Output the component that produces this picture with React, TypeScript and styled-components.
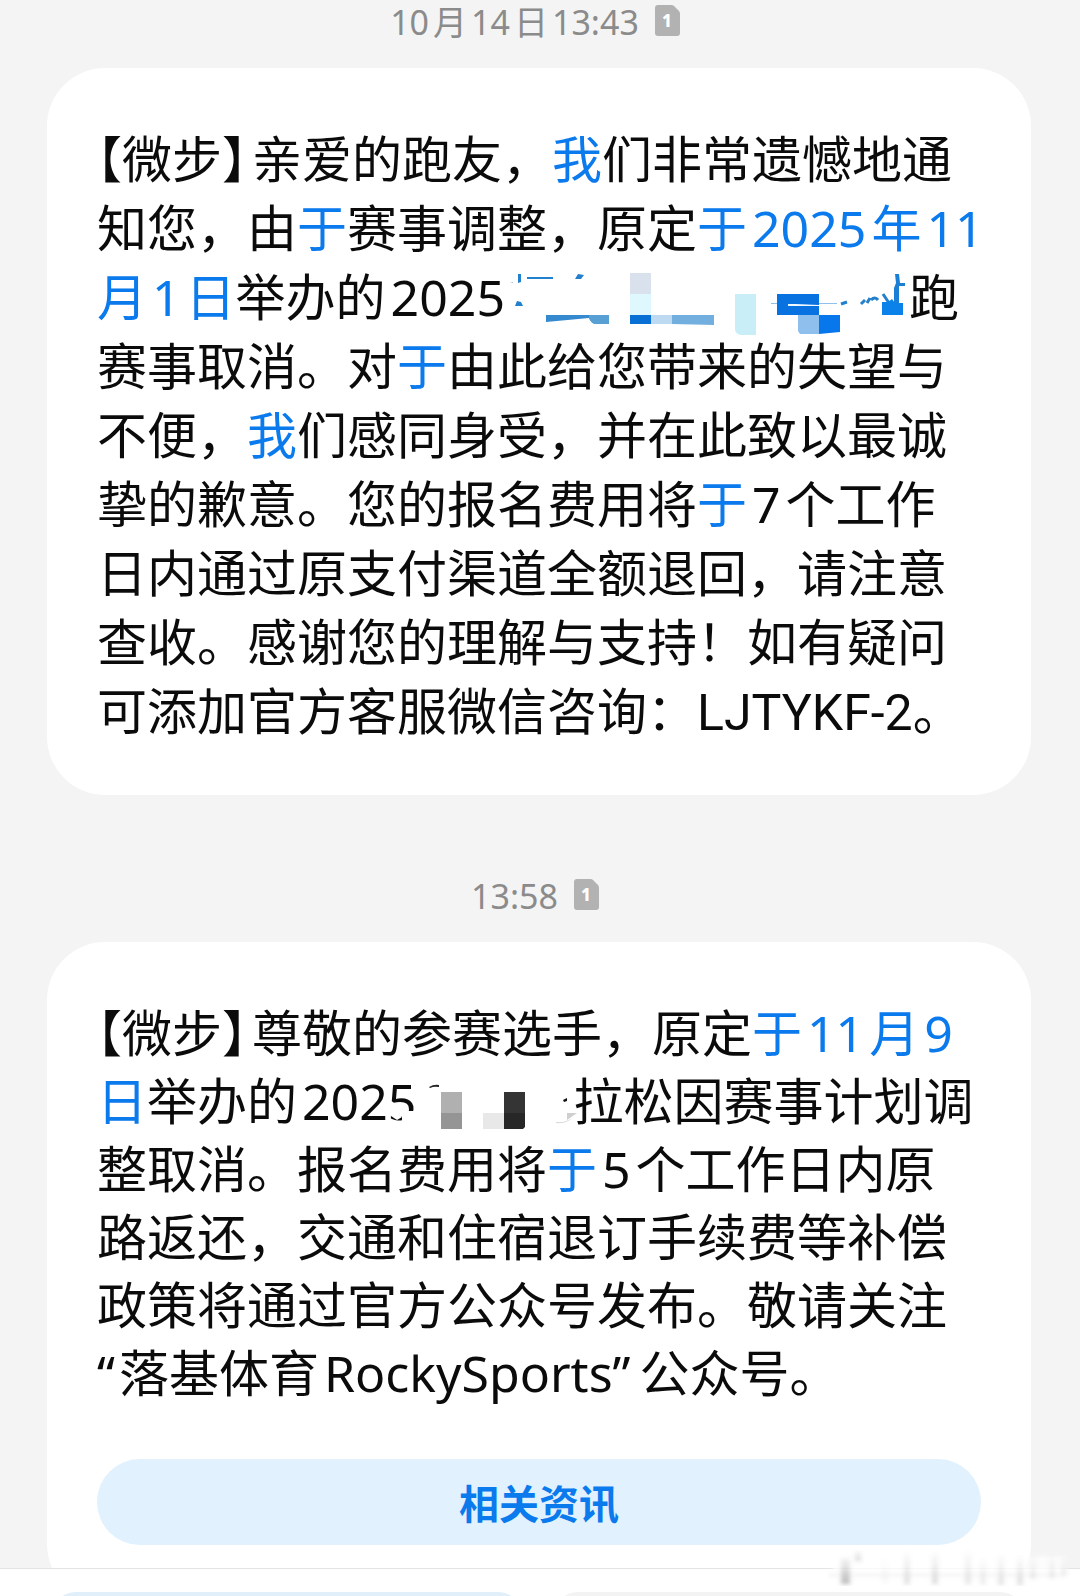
import React from "react";
import styled, { createGlobalStyle } from "styled-components";

const GlobalStyle = createGlobalStyle`
  * { box-sizing: border-box; }
  body {
    margin: 0;
    background: #f4f4f4;
    font-family: "Noto Sans", "Noto Sans CJK SC", sans-serif;
    text-autospace: no-autospace;
  }
`;

const Screen = styled.div`
  display: flex;
  flex-direction: column;
  height: 100vh;
  position: relative;
  overflow: hidden;
`;

const Thread = styled.main`
  flex: 1;
  min-height: 0;
  overflow: hidden;
  padding: 0 49px 0 47px;
`;

const Stamp = styled.div<{ $spaced?: boolean }>`
  display: flex;
  align-items: center;
  justify-content: center;
  gap: 16px;
  height: 40px;
  margin-top: ${(p) => (p.$spaced ? 79 : 0)}px;
  margin-bottom: 28px;
  padding-right: 8px;
  color: #8b8b8b;
  font-size: 34px;
  line-height: 40px;
  white-space: nowrap;
`;

const StampTime = styled.time`
  padding-top: 4px;
`;

const StampNum = styled.span`
  margin: 0 4px;
  &:first-child { margin-left: 0; }
  &:last-child { margin-right: 0; }
`;

const Bubble = styled.article<{ $withAction?: boolean }>`
  background: #fff;
  border-radius: 58px;
  padding: 54px 50px ${(p) => (p.$withAction ? 57 : 47)}px;
`;

const Message = styled.p<{ $leading: number }>`
  margin: 0;
  color: #0b0b0b;
  font-size: 50px;
  line-height: ${(p) => p.$leading}px;
`;

const Line = styled.span`
  display: block;
  white-space: nowrap;
`;

const Hot = styled.span`
  color: #0a7aec;
`;

const DateLink = styled.a`
  color: #0a7aec;
  text-decoration: none;
`;

const Num = styled.span<{ $tight?: boolean }>`
  margin: 0 ${(p) => (p.$tight ? 0 : 5)}px 0 5px;
`;

const Quote = styled.span`
  margin-right: 4px;
`;

const Account = styled.span`
  font-family: Roboto, "Noto Sans", sans-serif;
`;

const Bracket = styled.span<{ $close?: boolean }>`
  font-family: "Noto Sans CJK SC", sans-serif;
  font-feature-settings: "halt";
  margin-right: ${(p) => (p.$close ? 5 : 0)}px;
`;

const Mosaic = styled.svg`
  position: relative;
  vertical-align: top;
  overflow: visible;
`;

const Action = styled.button`
  display: block;
  width: 100%;
  height: 86px;
  margin-top: 52px;
  border: 0;
  border-radius: 43px;
  background: #e1f1fd;
  color: #0a7aec;
  font: 700 40px/48px "Noto Sans CJK SC", sans-serif;
`;

const BottomBar = styled.footer`
  flex: none;
  display: flex;
  gap: 32px;
  height: 28px;
  padding: 23px 56px 0 52px;
  border-top: 1px solid #e4e4e4;
  background: #fff;
  overflow: hidden;
`;

const BarButton = styled.button<{ $primary?: boolean }>`
  flex: 1;
  height: 86px;
  border: 0;
  border-radius: 24px;
  background: ${(p) => (p.$primary ? "#e1effb" : "#f3f3f3")};
`;

const Watermark = styled.svg`
  position: absolute;
  right: 8px;
  bottom: 10px;
  pointer-events: none;
`;

function SimIcon() {
  return (
    <svg width="25" height="31" viewBox="0 0 25 31" role="img" aria-label="SIM 1">
      <path d="M3 0H16.5Q18 0 19 1L24 6Q25 7 25 8.500V28Q25 31 22 31H3Q0 31 0 28V3Q0 0 3 0Z" fill="#b2b2b2" />
      <text x="12" y="22" textAnchor="middle" fill="#fff" fontFamily="Noto Sans" fontWeight="800" fontSize="17">1</text>
    </svg>
  );
}

function BlueMosaic() {
  return (
    <Mosaic width="404" height="69" viewBox="505 263 404 69" aria-hidden="true">
      <g fill="#2280cc">
        <path d="M518 274h3v8l-3 1zM527 277h26v2h-26zM575 279l3-5 6 1-3 4zM515 306l2-5 4 1 2 4z" />
        <path d="M510 283l3-1v1z" opacity=".5" />
      </g>
      <path d="M546 315h63v9h-14q-4-1-6-6l-43 4z" fill="#3489cf" />
      <path d="M589 315h20v9h-14q-4-1-6-6z" fill="#589fd4" />
      <path d="M630 273h21v21h-21z" fill="#d9e2ec" />
      <path d="M630 294h21v21h-21z" fill="#dff8fd" />
      <path d="M630 315h21v9h-21z" fill="#0870d4" />
      <path d="M651 315h21v9h-21z" fill="#bddaf2" />
      <path d="M672 315h42v10l-42-1z" fill="#73afde" />
      <path d="M735 294h21v41h-15q-6-1-6-6z" fill="#c9eef8" />
      <path d="M777 294h42v21h-42z" fill="#0873e0" />
      <path d="M771 303h6v1h-6zM819 303h18v1h-18z" fill="#8fc0ea" />
      <path d="M788 304h8l23 1v1h-31z" fill="#eef8ff" />
      <path d="M798 315h21v19h-19l-2-3z" fill="#8fbfed" />
      <path d="M819 315h21v17l-21 2z" fill="#0877ec" />
      <g fill="none" stroke="#2280cc" strokeWidth="3">
        <path d="M841 304l6-2M861 304l4-4M867 303l3-5M871 300q4-4 7 0M883 294l6 9" />
      </g>
      <path d="M895 274h4l1 9h5v3h-6v18h-5v-16l2-5z" fill="#1a80d6" />
      <path d="M882 302h6l4-3 3 4h8v12h-21z" fill="#0b82ea" />
    </Mosaic>
  );
}

function GreyMosaic() {
  return (
    <Mosaic width="157" height="68" viewBox="416 1067 157 68" aria-hidden="true">
      <path d="M402 1124v-8l5-5h12v10l-8 6z" fill="#fff" />
      <path d="M386 1111l8 1 8 5-5 3-6-4z" fill="#fff" />
      <path d="M429 1087q5-3 10-2v2q-5-1-9 1z" fill="#222" />
      <path d="M441 1092h21v21h-21z" fill="#b0b0b0" />
      <path d="M441 1113h21v16h-21z" fill="#959595" />
      <path d="M483 1113h21v16h-21z" fill="#e8e8e8" />
      <path d="M504 1092h21v21h-21z" fill="#343434" />
      <path d="M504 1113h21v14l-2 2h-19z" fill="#272727" />
      <path d="M563 1100l4-2v3l-3 1z" fill="#111" />
      <path d="M567 1113h10l-10 7z" fill="#cfcfcf" />
      <path d="M556 1122q10 1 16-4-5 6-16 5z" fill="#d5d5d5" />
    </Mosaic>
  );
}

const streaks = [
  [14, 8, 26, 0.34], [28, 1, 10, 0.2], [55, 10, 22, 0.05], [77, 4, 30, 0.16],
  [105, 4, 30, 0.18], [138, 3, 31, 0.13], [153, 10, 24, 0.1], [171, 7, 28, 0.14],
  [190, 8, 27, 0.16], [203, 7, 22, 0.1], [222, 6, 22, 0.1], [234, 5, 20, 0.09],
];

function FadedMark() {
  return (
    <Watermark width="245" height="36" viewBox="0 0 245 36" aria-hidden="true">
      <defs>
        <filter id="soft" x="-10%" y="-20%" width="120%" height="140%">
          <feGaussianBlur stdDeviation="2 2" />
        </filter>
        <linearGradient id="fade" x1="0" y1="0" x2="0" y2="1">
          <stop offset="0" stopColor="#777" stopOpacity=".2" />
          <stop offset="1" stopColor="#555" />
        </linearGradient>
      </defs>
      <rect x="6" y="6" width="234" height="26" fill="#fff" opacity=".75" filter="url(#soft)" />
      <g filter="url(#soft)">
        {streaks.map(([x, y, h, o]) => (
          <rect key={x} x={x} y={y} width={x === 14 ? 9 : 6} height={h} fill="url(#fade)" opacity={o * 1.2} />
        ))}
        <rect x="1" y="24" width="238" height="2" fill="#aaa" opacity=".2" />
      </g>
    </Watermark>
  );
}

const Sender = () => (
  <>
    <Bracket>【</Bracket>微步<Bracket $close>】</Bracket>
  </>
);

export default function App() {
  return (
    <Screen>
      <GlobalStyle />
      <Thread>
        <Stamp>
          <StampTime>
            <StampNum>10</StampNum>月<StampNum>14</StampNum>日<StampNum>13:43</StampNum>
          </StampTime>
          <SimIcon />
        </Stamp>
        <Bubble>
          <Message $leading={69}>
            <Line><Sender />亲爱的跑友，<Hot>我</Hot>们非常遗憾地通</Line>
            <Line>知您，由<Hot>于</Hot>赛事调整，原定<DateLink href="#date-1">于<Num>2025</Num>年<Num $tight>11</Num></DateLink></Line>
            <Line><DateLink href="#date-1">月<Num>1</Num>日</DateLink>举办的<Num $tight>2025</Num><BlueMosaic />跑</Line>
            <Line>赛事取消。对<Hot>于</Hot>由此给您带来的失望与</Line>
            <Line>不便，<Hot>我</Hot>们感同身受，并在此致以最诚</Line>
            <Line>挚的歉意。您的报名费用将<Hot>于</Hot><Num>7</Num>个工作</Line>
            <Line>日内通过原支付渠道全额退回，请注意</Line>
            <Line>查收。感谢您的理解与支持！如有疑问</Line>
            <Line>可添加官方客服微信咨询：<Account>LJTYKF-2</Account>。</Line>
          </Message>
        </Bubble>
        <Stamp $spaced>
          <StampTime>13:58</StampTime>
          <SimIcon />
        </Stamp>
        <Bubble $withAction>
          <Message $leading={68}>
            <Line><Sender />尊敬的参赛选手，原定<DateLink href="#date-2">于<Num>11</Num>月<Num $tight>9</Num></DateLink></Line>
            <Line><DateLink href="#date-2">日</DateLink>举办的<Num $tight>2025</Num><GreyMosaic />拉松因赛事计划调</Line>
            <Line>整取消。报名费用将<Hot>于</Hot><Num>5</Num>个工作日内原</Line>
            <Line>路返还，交通和住宿退订手续费等补偿</Line>
            <Line>政策将通过官方公众号发布。敬请关注</Line>
            <Line><Quote>“</Quote>落基体育<Num>RockySports<Quote>”</Quote></Num>公众号。</Line>
          </Message>
          <Action type="button">相关资讯</Action>
        </Bubble>
      </Thread>
      <BottomBar>
        <BarButton type="button" $primary aria-label="菜单一" />
        <BarButton type="button" aria-label="菜单二" />
      </BottomBar>
      <FadedMark />
    </Screen>
  );
}
